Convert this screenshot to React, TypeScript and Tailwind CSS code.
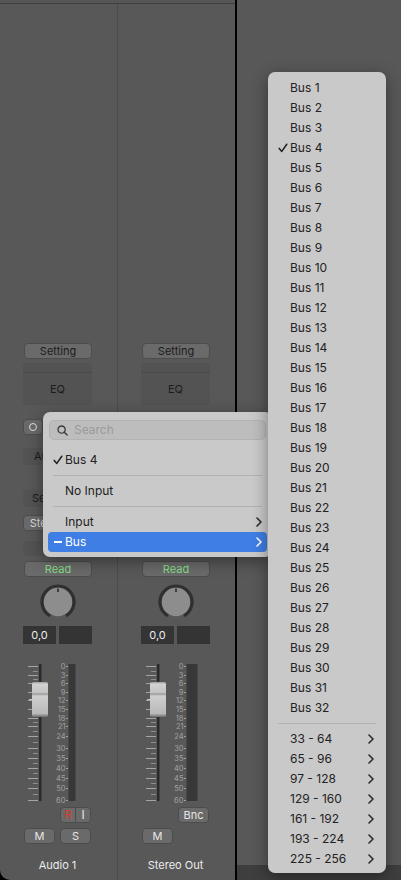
import React from 'react';

const BUSES = Array.from({ length: 32 }, (_, i) => `Bus ${i + 1}`);
const RANGES = ['33 - 64', '65 - 96', '97 - 128', '129 - 160', '161 - 192', '193 - 224', '225 - 256'];

// dB marks on the fader scale: [label, y]
const MARKS: [number, number][] = [
  [0, 5], [3, 14], [6, 22], [9, 31], [12, 39], [15, 48], [18, 57], [21, 65],
  [24, 75], [30, 87], [35, 97], [40, 107], [45, 117], [50, 127], [60, 139],
];

const Chevron = ({ color = '#2a2a2a' }: { color?: string }) => (
  <svg width="6" height="10" viewBox="0 0 6 10" className="block">
    <path d="M1 1l4 4-4 4" fill="none" stroke={color} strokeWidth="1.6" strokeLinecap="round" strokeLinejoin="round" />
  </svg>
);

const Check = () => (
  <svg width="10" height="10" viewBox="0 0 10 10" className="block">
    <path d="M1.2 5.4l2.6 3L8.8 1.2" fill="none" stroke="#1f1f1f" strokeWidth="1.5" strokeLinecap="round" strokeLinejoin="round" />
  </svg>
);

function Knob() {
  return (
    <svg width="36" height="36" viewBox="0 0 36 36" className="block">
      <path d="M10 31.86A16 16 0 1 1 26 31.86" fill="none" stroke="#2f2f2f" strokeWidth="3.2" />
      <circle cx="18" cy="18" r="14.2" fill="#8d8d8d" />
      <line x1="18" y1="4.5" x2="18" y2="8" stroke="#1e1e1e" strokeWidth="1.4" />
    </svg>
  );
}

function Fader({ id, meterWidth }: { id: string; meterWidth: number }) {
  const minor: number[] = [];
  for (let i = 0; i < MARKS.length - 1; i++) minor.push((MARKS[i][1] + MARKS[i + 1][1]) / 2);
  return (
    <svg width="69" height="144" className="block">
      <defs>
        <linearGradient id={id} x1="0" y1="0" x2="0" y2="1">
          <stop offset="0" stopColor="#9a9a9a" />
          <stop offset="0.06" stopColor="#d2d2d2" />
          <stop offset="0.3" stopColor="#c4c4c4" />
          <stop offset="0.34" stopColor="#9c9c9c" />
          <stop offset="0.4" stopColor="#cfcfcf" />
          <stop offset="0.9" stopColor="#b9b9b9" />
          <stop offset="1" stopColor="#6e6e6e" />
        </linearGradient>
      </defs>
      {MARKS.map(([n, y]) => (
        <line key={`t${n}`} x1="5" x2="15" y1={y + 0.5} y2={y + 0.5} stroke="#a4a4a4" />
      ))}
      {minor.map((y, i) => (
        <line key={`m${i}`} x1="10" x2="15" y1={Math.round(y) + 0.5} y2={Math.round(y) + 0.5} stroke="#8e8e8e" />
      ))}
      <rect x="16" y="3" width="2.5" height="137" fill="#2b2b2b" />
      {MARKS.map(([n, y]) => (
        <g key={`n${n}`}>
          <text x="42.5" y={y + 3} textAnchor="end" fontSize="7.5" fill="#a0a0a0" fontFamily="Inter, sans-serif">
            {n}
          </text>
          <line x1="43" x2="45" y1={y + 0.5} y2={y + 0.5} stroke="#a0a0a0" />
        </g>
      ))}
      <rect x="45.5" y="3" width={meterWidth} height="137" fill="#383838" />
      <rect x="9" y="21" width="16" height="35" rx="1.5" fill={`url(#${id})`} />
      <line x1="6" x2="9" y1="38.5" y2="38.5" stroke="#c8c8c8" />
    </svg>
  );
}

const btn = 'rounded-[4px] bg-[#6a6a6a] border border-[#4c4c4c] flex items-center justify-center text-[11px] leading-none';

// covered: the routing slots sit under the open input menu, so their labels are left empty
function Strip({ name, stereo, covered }: { name: string; stereo?: boolean; covered?: boolean }) {
  return (
    <div className="w-[117px] flex flex-col pl-[23px]">
      <div className={`${btn} w-[68px] h-[16px] ml-px mt-[339px] text-[#1c1c1c]`}>Setting</div>

      <div className="w-[69px] h-[42px] mt-[4px] rounded-[3px] bg-[#535353] flex flex-col">
        <div className="h-[10px] border-b border-[#4a4a4a]" />
        <div className="flex-1 flex items-center justify-center text-[11px] text-[#1c1c1c]">EQ</div>
      </div>

      <div className="flex gap-[3px] mt-[14px] h-[16px]">
        <div className={`${btn} w-[20px] h-[16px]`}>
          <div className="w-[8px] h-[8px] rounded-full border-[1.5px] border-[#e4e4e4]" />
        </div>
        <div className="w-[46px] h-[16px] rounded-[3px] bg-[#535353]" />
      </div>

      <div className="w-[69px] h-[17px] mt-[13px] rounded-[3px] bg-[#535353] flex items-center justify-center text-[11px] text-[#1c1c1c]">
        {covered ? '' : 'Audio FX'}
      </div>

      <div className="w-[69px] h-[17px] mt-[25px] rounded-[3px] bg-[#535353] flex items-center pl-[9px] text-[11px] text-[#1c1c1c]">
        {covered ? '' : 'Send'}
      </div>

      <div className={`${btn} w-[69px] h-[16px] mt-[8px] text-[#dedede]`}>{covered ? '' : 'Stereo Out'}</div>

      <div className="w-[69px] h-[15px] mt-[10px] rounded-[3px] bg-[#535353]" />

      <div className={`${btn} w-[68px] h-[16px] ml-px mt-[5px] text-[#86dd86]`}>Read</div>

      <div className="w-[69px] flex justify-center mt-[7px]">
        <Knob />
      </div>

      <div className="flex gap-[3px] mt-[6px]">
        <div className="w-[33px] h-[18px] bg-[#343434] flex items-center justify-center text-[11px] text-[#ececec]">0,0</div>
        <div className="w-[33px] h-[18px] bg-[#343434]" />
      </div>

      <div className="mt-[17px]">
        <Fader id={stereo ? 'capStereo' : 'capMono'} meterWidth={stereo ? 11 : 7} />
      </div>

      <div className="grid grid-cols-[31px_31px] gap-x-[5px] gap-y-[5px] ml-px mt-[2px]">
        <div />
        {stereo ? (
          <div className={`${btn} h-[16px] text-[#e6e6e6]`}>Bnc</div>
        ) : (
          <div className={`${btn} h-[16px] overflow-hidden`}>
            <span className="flex-1 text-center text-[12px] text-[#d23a2c]">R</span>
            <span className="w-px h-full bg-[#4c4c4c]" />
            <span className="flex-1 text-center text-[12px] text-[#e6e6e6]">I</span>
          </div>
        )}
        <div className={`${btn} h-[16px] text-[#e6e6e6]`}>M</div>
        {stereo ? <div /> : <div className={`${btn} h-[16px] text-[#e6e6e6]`}>S</div>}
      </div>

      <div className="w-[69px] mt-[15px] text-center text-[11px] leading-[13px] text-[#ececec]">{name}</div>
    </div>
  );
}

export default function App() {
  return (
    <div className="relative w-[401px] h-[880px] overflow-hidden bg-black flex font-['Inter','Noto_Sans',sans-serif]">
      {/* mixer */}
      <div className="w-[235px] h-full bg-[#585858] rounded-bl-[10px] flex flex-col">
        <div className="h-[4px] bg-[#565656] border-b border-[#3f3f3f]" />
        <div className="flex flex-1">
          <Strip name="Audio 1" />
          <div className="w-px bg-[#4b4b4b]" />
          <Strip name="Stereo Out" stereo covered />
        </div>
      </div>
      <div className="w-[2px] bg-black" />
      <div className="flex-1 flex flex-col bg-[#585858]">
        <div className="flex-1" />
        <div className="h-[15px] bg-[#3e3e3e]" />
      </div>

      {/* input popup */}
      <div className="absolute left-[43px] top-[412px] w-[229px] rounded-[7px] bg-[#c9c9c9] pt-[8px] pb-[5px] shadow-[0_4px_16px_rgba(0,0,0,0.4)] text-[12px] text-[#222]">
        <div className="mx-[6px] h-[20px] rounded-[5px] bg-[#bdbdbd] border border-[#b3b3b3] flex items-center pl-[7px] gap-[6px]">
          <svg width="11" height="11" viewBox="0 0 11 11" className="block">
            <circle cx="4.6" cy="4.6" r="3.6" fill="none" stroke="#3a3a3a" strokeWidth="1.3" />
            <path d="M7.3 7.3l2.8 2.8" stroke="#3a3a3a" strokeWidth="1.4" strokeLinecap="round" />
          </svg>
          <span className="text-[#9a9a9a]">Search</span>
        </div>
        <div className="mt-[10px] mx-[5px] h-[20px] flex items-center">
          <span className="w-[17px] pl-[5px]"><Check /></span>
          <span>Bus 4</span>
        </div>
        <div className="mx-[10px] h-[11px] flex items-center"><div className="w-full h-px bg-[#b2b2b2]" /></div>
        <div className="mx-[5px] h-[20px] flex items-center pl-[17px]">No Input</div>
        <div className="mx-[10px] h-[11px] flex items-center"><div className="w-full h-px bg-[#b2b2b2]" /></div>
        <div className="mx-[5px] h-[20px] flex items-center pl-[17px] pr-[5px]">
          <span className="flex-1">Input</span>
          <Chevron />
        </div>
        <div className="mx-[5px] h-[20px] rounded-[4px] bg-[#3f7ee4] text-white flex items-center pr-[5px]">
          <span className="w-[17px] pl-[6px]"><span className="block w-[8px] h-[1.5px] bg-white" /></span>
          <span className="flex-1">Bus</span>
          <Chevron color="#ffffff" />
        </div>
      </div>

      {/* bus submenu */}
      <div className="absolute left-[268px] top-[72px] w-[118px] rounded-[7px] bg-[#c9c9c9] pt-[6px] pb-[4px] shadow-[0_4px_16px_rgba(0,0,0,0.4)] text-[12px] text-[#222]">
        {BUSES.map((b) => (
          <div key={b} className="h-[20px] flex items-center">
            <span className="w-[22px] pl-[10px]">{b === 'Bus 4' && <Check />}</span>
            <span>{b}</span>
          </div>
        ))}
        <div className="mx-[10px] h-[11px] flex items-center"><div className="w-full h-px bg-[#b2b2b2]" /></div>
        {RANGES.map((r) => (
          <div key={r} className="h-[20px] flex items-center pl-[22px] pr-[12px]">
            <span className="flex-1">{r}</span>
            <Chevron />
          </div>
        ))}
      </div>
    </div>
  );
}
